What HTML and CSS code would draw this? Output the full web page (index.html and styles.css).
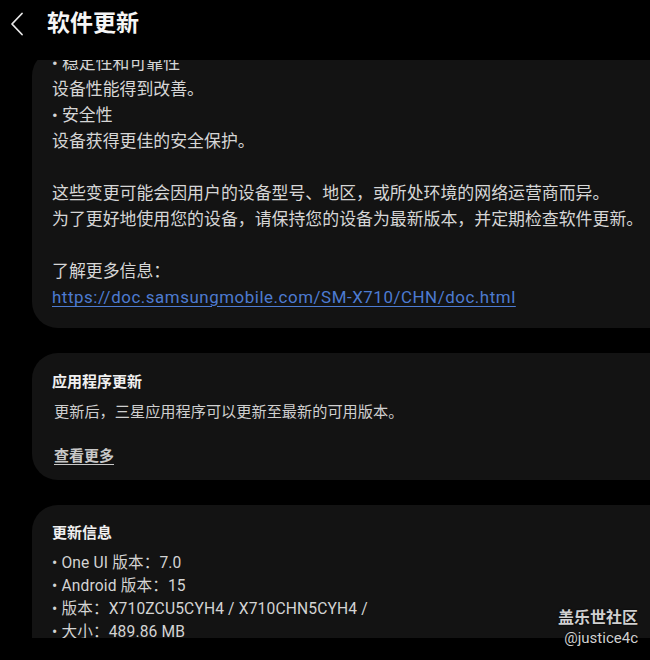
FILE: index.html
```html
<!DOCTYPE html>
<html lang="zh-CN">
<head>
  <meta charset="UTF-8">
  <title>软件更新</title>
  <link rel="stylesheet" href="styles.css">
</head>
<body>
  <div class="topbar">
    <svg class="back" width="16" height="24" viewBox="0 0 16 24">
      <polyline points="13,1.5 3,12 13,22.5" fill="none" stroke="#e8e8e8" stroke-width="1.8" stroke-linecap="round" stroke-linejoin="round"/>
    </svg>
    <h1 class="title">软件更新</h1>
  </div>

  <div class="scroller">
    <div class="card notes">
      <p class="peek">• 稳定性和可靠性</p>
      <p>设备性能得到改善。</p>
      <p>• 安全性</p>
      <p>设备获得更佳的安全保护。</p>
      <p class="blank"></p>
      <p>这些变更可能会因用户的设备型号、地区，或所处环境的网络运营商而异。</p>
      <p>为了更好地使用您的设备，请保持您的设备为最新版本，并定期检查软件更新。</p>
      <p class="blank"></p>
      <p>了解更多信息：</p>
      <p><a class="link" href="#">https://doc.samsungmobile.com/SM-X710/CHN/doc.html</a></p>
    </div>

    <div class="card apps">
      <h2 class="card-title">应用程序更新</h2>
      <p class="desc">更新后，三星应用程序可以更新至最新的可用版本。</p>
      <a class="more" href="#">查看更多</a>
    </div>

    <div class="card info">
      <h2 class="card-title">更新信息</h2>
      <ul class="info-list">
        <li>• One UI 版本：7.0</li>
        <li>• Android 版本：15</li>
        <li>• 版本：X710ZCU5CYH4 / X710CHN5CYH4 /</li>
        <li>• 大小：489.86 MB</li>
      </ul>
    </div>
  </div>

  <div class="watermark">
    <div class="wm-name">盖乐世社区</div>
    <div class="wm-user">@justice4c</div>
  </div>
</body>
</html>
```

FILE: styles.css
```css
body {
  margin: 0;
  background: #000;
  color: #d6d6d6;
  font-family: Roboto, "Noto Sans CJK SC", sans-serif;
  width: 650px;
  height: 660px;
  overflow: hidden;
  position: relative;
}
p, h1, h2, ul {
  margin: 0;
  padding: 0;
}
.topbar {
  height: 60px;
  display: flex;
  align-items: flex-start;
  padding-top: 12px;
  box-sizing: border-box;
}
.back {
  margin-left: 9px;
}
.title {
  margin-left: 22px;
  font-size: 23px;
  line-height: 24px;
  font-weight: 700;
  color: #f5f5f5;
}
.scroller {
  height: 578px;
  overflow: hidden;
}
.card {
  background: #131313;
  margin-left: 32px;
  margin-right: -40px;
  border-radius: 26px;
  padding-left: 20px;
}
.notes {
  padding-bottom: 18px;
  font-size: 16.9px;
  line-height: 26px;
  color: #d6d6d6;
}
.notes p {
  white-space: nowrap;
}
.notes .peek {
  margin-top: -10px;
}
.notes .blank {
  height: 26px;
}
.link {
  color: #4d7bd1;
  letter-spacing: 0.55px;
  text-decoration: underline;
  text-underline-offset: 3px;
}
.apps {
  margin-top: 25px;
  padding-top: 18px;
  padding-bottom: 13px;
}
.card-title {
  font-size: 15px;
  line-height: 22px;
  font-weight: 700;
  color: #f0f0f0;
}
.desc {
  margin-top: 8px;
  margin-left: 2px;
  font-size: 15.2px;
  line-height: 22px;
  color: #cfcfcf;
}
.more {
  display: block;
  margin-top: 22px;
  margin-left: 2px;
  font-size: 15px;
  line-height: 22px;
  font-weight: 700;
  color: #c8c8c8;
  text-decoration: underline;
  text-underline-offset: 3px;
}
.info {
  margin-top: 25px;
  padding-top: 17px;
  padding-bottom: 20px;
}
.info-list {
  list-style: none;
  margin-top: 8px;
  font-size: 15.6px;
  line-height: 23px;
  letter-spacing: 0.15px;
  color: #d4d4d4;
}
.watermark {
  position: absolute;
  right: 12px;
  bottom: 12px;
  text-align: right;
  color: #d0d0d0;
  text-shadow: 0 0 2px #000;
}
.wm-name {
  font-size: 16px;
  line-height: 20px;
  font-weight: 700;
}
.wm-user {
  font-size: 15px;
  line-height: 20px;
}
```
